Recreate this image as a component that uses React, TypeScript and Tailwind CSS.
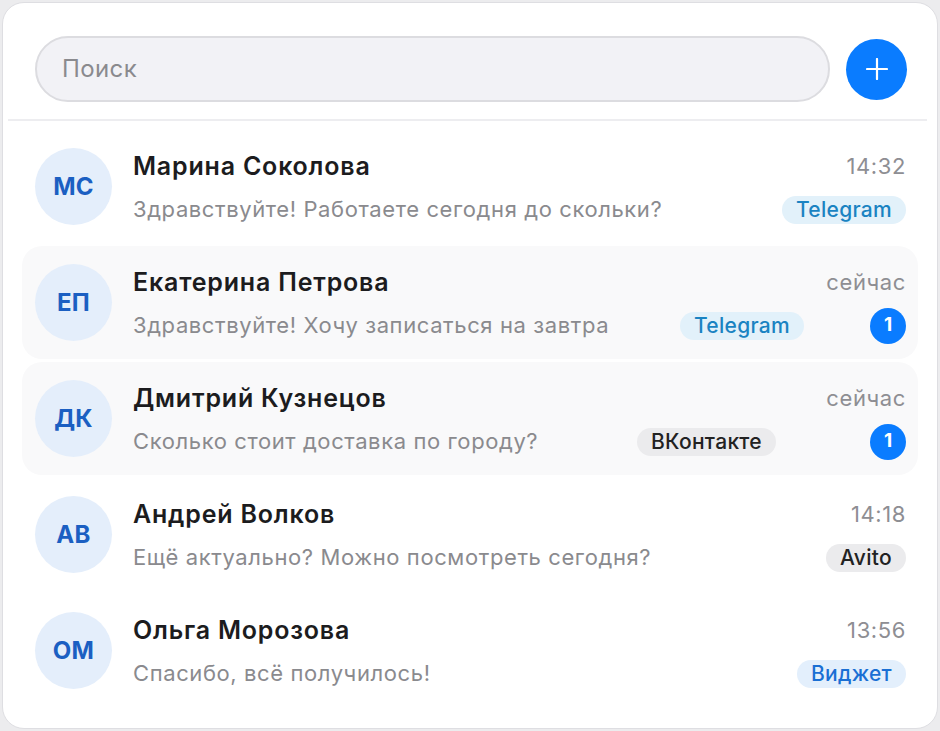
import React from "react";

type Chat = {
  initials: string;
  name: string;
  message: string;
  time: string;
  tag: string;
  tagClass: string;
  tagMargin: string;
  badge?: number;
  highlighted?: boolean;
};

const chats: Chat[] = [
  {
    initials: "МС",
    name: "Марина Соколова",
    message: "Здравствуйте! Работаете сегодня до скольки?",
    time: "14:32",
    tag: "Telegram",
    tagClass: "bg-[#e2f1fa] text-[#1a83c2]",
    tagMargin: "mr-0",
  },
  {
    initials: "ЕП",
    name: "Екатерина Петрова",
    message: "Здравствуйте! Хочу записаться на завтра",
    time: "сейчас",
    tag: "Telegram",
    tagClass: "bg-[#e2f1fa] text-[#1a83c2]",
    tagMargin: "mr-[66px]",
    badge: 1,
    highlighted: true,
  },
  {
    initials: "ДК",
    name: "Дмитрий Кузнецов",
    message: "Сколько стоит доставка по городу?",
    time: "сейчас",
    tag: "ВКонтакте",
    tagClass: "bg-[#ebebed] text-[#222222]",
    tagMargin: "mr-[94px]",
    badge: 1,
    highlighted: true,
  },
  {
    initials: "АВ",
    name: "Андрей Волков",
    message: "Ещё актуально? Можно посмотреть сегодня?",
    time: "14:18",
    tag: "Avito",
    tagClass: "bg-[#ebebed] text-[#222222]",
    tagMargin: "mr-0",
  },
  {
    initials: "ОМ",
    name: "Ольга Морозова",
    message: "Спасибо, всё получилось!",
    time: "13:56",
    tag: "Виджет",
    tagClass: "bg-[#e3effc] text-[#1a6fd4]",
    tagMargin: "mr-0",
  },
];

function Row({ c }: { c: Chat }) {
  return (
    <div
      className={`flex items-center h-[113px] pl-[13px] pr-[12px] rounded-[20px] ${
        c.highlighted ? "bg-[#f9f9fa]" : "bg-white"
      }`}
    >
      <div className="w-[77px] h-[77px] shrink-0 rounded-full bg-[#e4eefb] flex items-center justify-center text-[#1b5fc2] text-[24px] font-bold tracking-[0.3px]">
        {c.initials}
      </div>
      <div className="flex-1 min-w-0 ml-[21px] pt-[6px] flex flex-col">
        <div className="flex items-center h-[30px]">
          <div className="flex-1 text-[25px] font-semibold tracking-[0.8px] text-[#1c1c1e] truncate">{c.name}</div>
          <div className="text-[22px] tracking-[0.6px] text-[#8e8e93]">{c.time}</div>
        </div>
        <div className="flex items-center h-[36px] mt-[10px]">
          <div className="flex-1 min-w-0 text-[22px] tracking-[0.6px] text-[#8a8a8e] truncate">{c.message}</div>
          <div
            className={`h-[28px] px-[14px] rounded-full flex items-center text-[21px] font-medium tracking-[0.3px] ${c.tagClass} ${c.tagMargin}`}
          >
            {c.tag}
          </div>
          {c.badge ? (
            <div className="w-[36px] h-[36px] rounded-full bg-[#0a7cff] text-white text-[19px] font-bold flex items-center justify-center">
              {c.badge}
            </div>
          ) : null}
        </div>
      </div>
    </div>
  );
}

export default function App() {
  return (
    <div
      className="w-[940px] h-[731px] bg-[#ececee] p-[2px]"
      style={{ fontFamily: "Inter, 'Noto Sans', sans-serif" }}
    >
      <div className="h-full rounded-[22px] bg-white border border-[#dedee2] flex flex-col">
        <div className="flex items-center pl-[32px] pr-[30px] pt-[33px]">
          <div className="flex-1 h-[66px] rounded-full bg-[#f2f2f6] border-2 border-[#dcdce0] flex items-center pl-[25px] text-[24px] tracking-[0.4px] text-[#8a8a8e]">
            Поиск
          </div>
          <button className="ml-[16px] w-[61px] h-[61px] rounded-full bg-[#0a7cff] flex items-center justify-center">
            <svg width="22" height="22" viewBox="0 0 22 22" fill="none">
              <path d="M11 1v20M1 11h20" stroke="white" strokeWidth="2.2" strokeLinecap="round" />
            </svg>
          </button>
        </div>
        <div className="h-[2px] bg-[#ededf0] mt-[17px] ml-[5px] mr-[10px]" />
        <div className="flex flex-col gap-[3px] mt-[9px] mx-[19px]">
          {chats.map((c) => (
            <Row key={c.name} c={c} />
          ))}
        </div>
      </div>
    </div>
  );
}
